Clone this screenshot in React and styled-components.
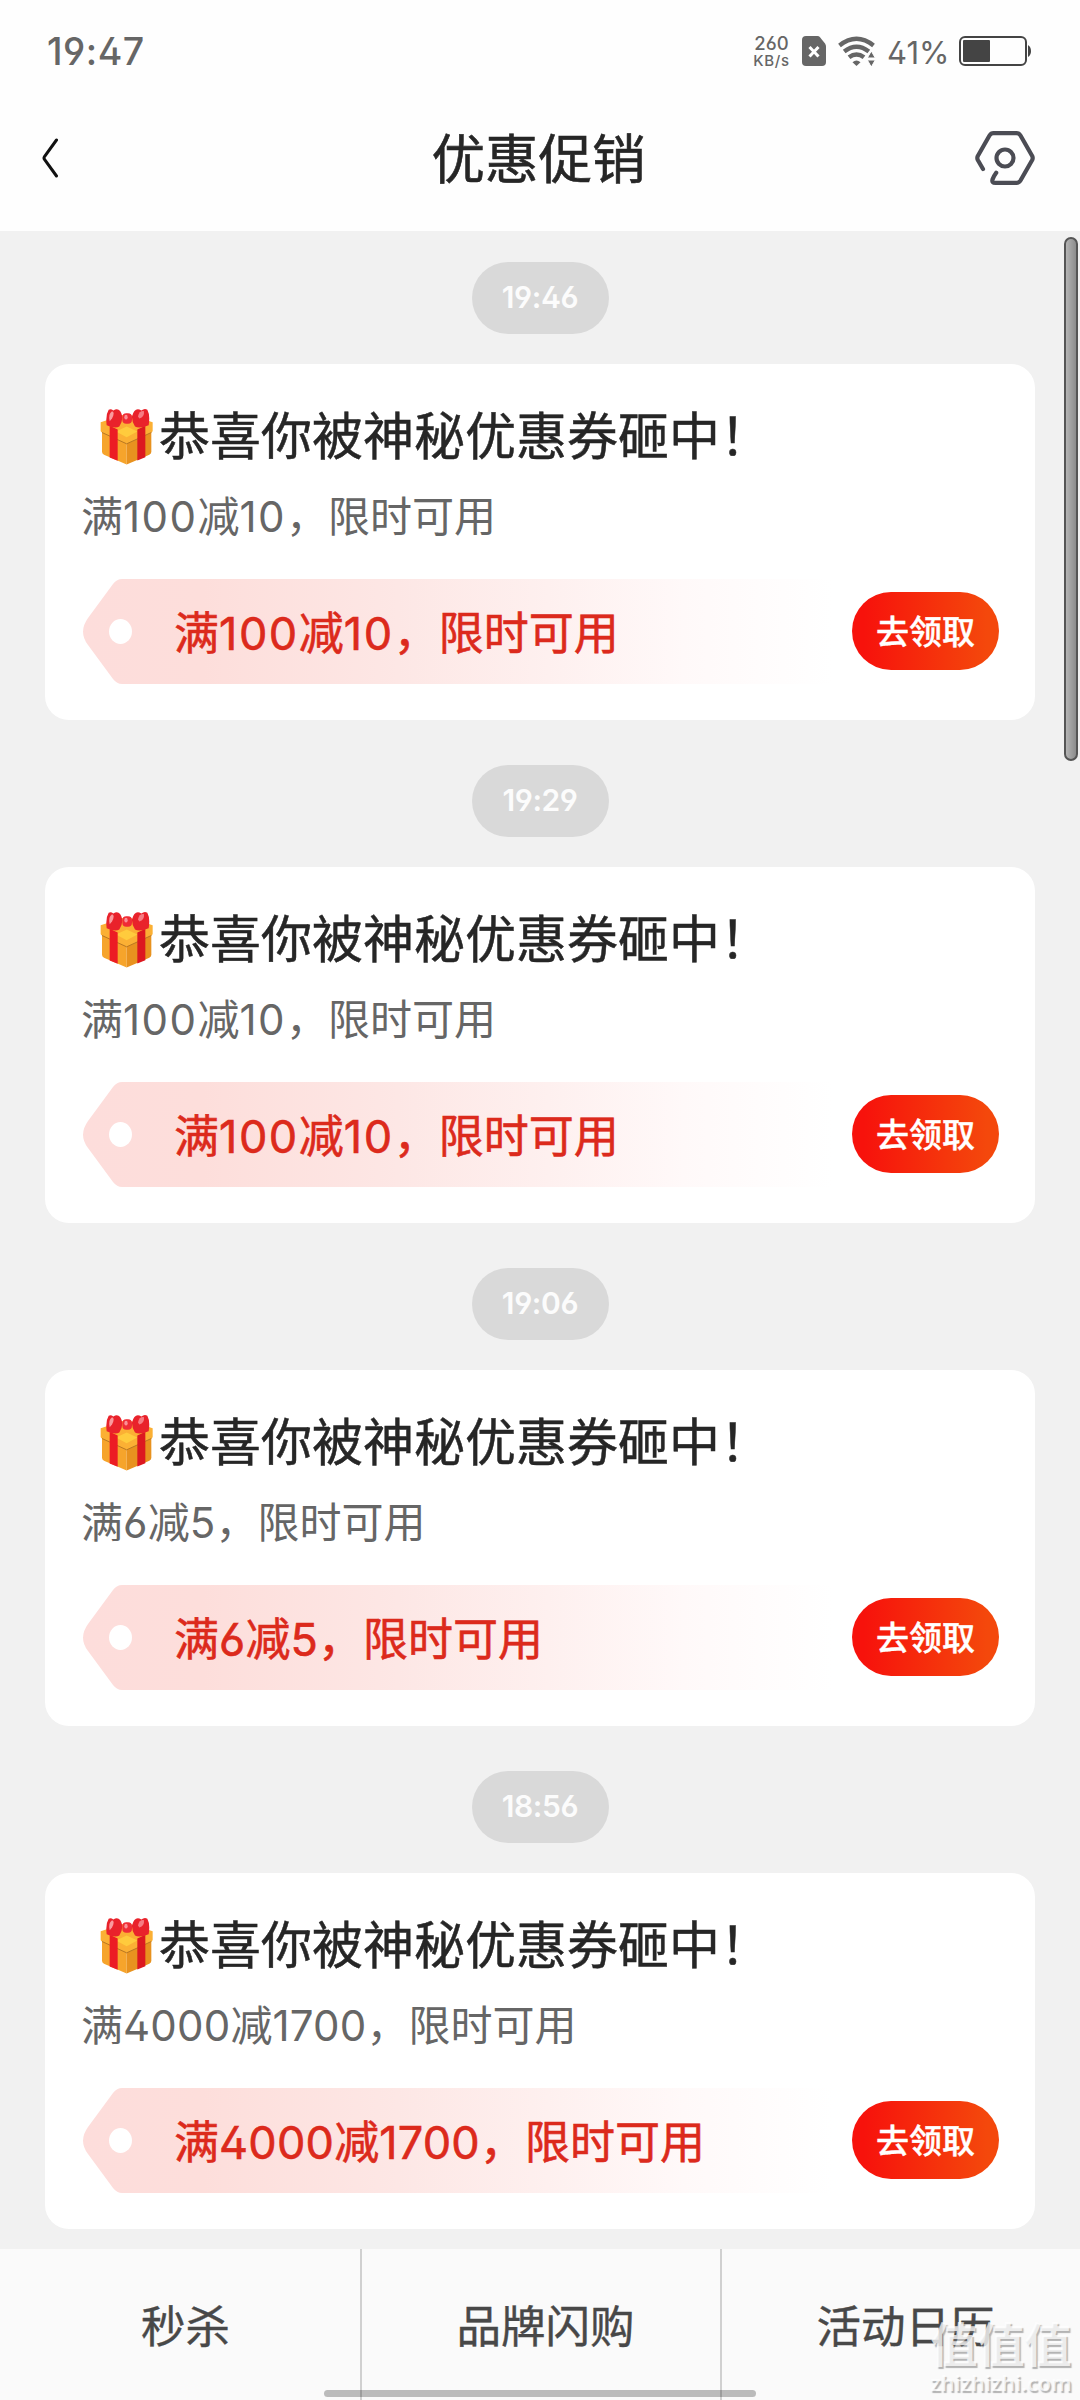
import React from 'react';

import styled, { createGlobalStyle } from 'styled-components';

const textColor = '#262626';
const subColor = '#666666';
const statusColor = '#666666';
const pointColor = '#dc2a1c';

const GlobalStyle = createGlobalStyle`
    * {
        box-sizing: border-box;
    }
    body {
        margin: 0;
        font-family: Inter, 'Noto Sans CJK SC', sans-serif;
        font-feature-settings: 'ss01';
        white-space: nowrap;
    }
`;

const Container = styled.div`
    width: 1080px;
    height: 2400px;
    position: relative;
    display: flex;
    flex-direction: column;
    overflow: hidden;
    background-color: #fefefe;
`;

const StatusBar = styled.div`
    height: 102px;
    padding: 0 49px 0 47px;
    display: flex;
    align-items: center;
    justify-content: space-between;
    color: ${statusColor};
`;

const Clock = styled.div`
    padding-top: 1px;
    font-size: 37.5px;
    line-height: 44px;
    letter-spacing: 0.5px;
    font-weight: 500;
`;

const StatusIcons = styled.div`
    display: flex;
    align-items: center;
`;

const Speed = styled.div`
    width: 37px;
    margin-right: 12px;
    text-align: center;
    font-size: 18.5px;
    line-height: 18px;
    font-weight: 500;
`;

const SpeedUnit = styled.div`
    font-size: 15px;
    line-height: 17px;
    letter-spacing: 0.7px;
`;

const Percent = styled.div`
    margin: 3px 10px 0 11px;
    width: 62px;
    font-size: 31px;
    line-height: 36px;
    letter-spacing: 0;
`;

const TitleBar = styled.div`
    height: 129px;
    padding: 0 45px 17px 42px;
    display: grid;
    grid-template-columns: 1fr auto 1fr;
    align-items: center;
`;

const Title = styled.div`
    padding-top: 4px;
    font-size: 53.5px;
    line-height: 72px;
    color: ${textColor};
    -webkit-text-stroke: 0.6px ${textColor};
`;

const TitleSide = styled.div`
    display: flex;
    justify-content: ${({ $end }) => ($end ? 'flex-end' : 'flex-start')};
`;

const List = styled.div`
    height: 2018px;
    padding: 31px 45px 0;
    background-color: #f1f1f1;
`;

const Time = styled.div`
    width: 137px;
    height: 72px;
    margin: 0 auto 30px;
    border-radius: 36px;
    background-color: #d9d9d9;
    color: #fcfcfc;
    font-size: 30px;
    line-height: 70px;
    font-weight: 600;
    letter-spacing: -0.4px;
    text-align: center;
`;

const Card = styled.div`
    width: 990px;
    height: 356px;
    margin-bottom: 45px;
    padding: 36px 36px 0 38px;
    border-radius: 24px;
    background-color: white;
`;

const CardTitle = styled.div`
    height: 72px;
    padding-left: 17px;
    display: flex;
    align-items: center;
    font-size: 51px;
    line-height: 72px;
    color: ${textColor};
    -webkit-text-stroke: 0.5px ${textColor};
`;

const CardTitleText = styled.div`
    padding-top: 2px;
    margin-left: 5px;
`;

const CardText = styled.div`
    height: 62px;
    margin: 14px 0 31px -2px;
    font-size: 42px;
    line-height: 62px;
    color: ${subColor};
`;

const CouponRow = styled.div`
    display: flex;
    align-items: center;
    justify-content: space-between;
`;

const Coupon = styled.div`
    width: 750px;
    height: 105px;
    padding-left: 26px;
    display: flex;
    align-items: center;
    background: linear-gradient(90deg, #fddddb 0%, #fddedb 16%, #fde7e5 42%, #fef0ef 62%, #fff9f9 80%, #ffffff 100%);
    clip-path: path('M39 0 H750 V105 H39 Q34 105 30 100 L5 66 Q-5 53 5 39 L30 5 Q34 0 39 0 Z');
`;

const Hole = styled.div`
    width: 23px;
    height: 25px;
    margin-right: 42px;
    border-radius: 50%;
    background-color: white;
`;

const CouponText = styled.div`
    padding-top: 5px;
    font-size: 45px;
    line-height: 64px;
    color: ${pointColor};
    -webkit-text-stroke: 0.6px ${pointColor};
`;

const Amount = styled.span`
    letter-spacing: ${({ $loose }) => ($loose ? '0.035em' : '0.005em')};
`;

const Button = styled.button`
    width: 147px;
    height: 78px;
    margin-bottom: 2px;
    padding: 2px 0 0;
    border: none;
    border-radius: 39px;
    background: linear-gradient(90deg, #f7120c 8%, #f4480c 92%);
    color: white;
    font-family: inherit;
    font-size: 33px;
    line-height: 76px;
    font-weight: 500;
    -webkit-text-stroke: 0.4px white;
`;

const TabBar = styled.div`
    height: 151px;
    display: grid;
    grid-template-columns: repeat(3, 360px);
    background-color: #fafafa;
`;

const Tab = styled.div`
    padding: 1px 0 0 ${({ $first }) => ($first ? '11px' : '9px')};
    border-left: ${({ $first }) => ($first ? 'none' : '2px solid #d0d0d0')};
    text-align: center;
    font-size: 44.5px;
    line-height: 154px;
    color: #484848;
    -webkit-text-stroke: 0.4px #484848;
`;

const ScrollThumb = styled.div`
    position: absolute;
    top: 237px;
    right: 2px;
    width: 14px;
    height: 524px;
    border: 2px solid #555;
    border-radius: 7px;
    background: linear-gradient(90deg, #b4b4b4, #8c8c8c);
`;

const HomeIndicator = styled.div`
    position: absolute;
    left: 324px;
    bottom: 3px;
    width: 432px;
    height: 7px;
    border-radius: 4px;
    background-color: rgba(0, 0, 0, 0.25);
`;

const Watermark = styled.div`
    position: absolute;
    right: 7px;
    bottom: 6px;
    width: 144px;
    text-align: center;
    color: rgba(255, 255, 255, 0.75);
    text-shadow: 1.5px 1.5px 1px rgba(120, 120, 120, 0.55);
`;

const WatermarkName = styled.div`
    font-size: 47px;
    line-height: 54px;
    font-weight: 700;
`;

const WatermarkSite = styled.div`
    font-family: 'Noto Sans', sans-serif;
    font-size: 21.5px;
    line-height: 22px;
    font-weight: 600;
`;

const SimIcon = () => (
    <svg width="24" height="30" viewBox="0 0 24 30">
        <path d="M4 0 H15.500 Q17 0 18 1.200 L23 7.500 Q24 8.800 24 10.500 V26 Q24 30 20 30 H4 Q0 30 0 26 V4 Q0 0 4 0 Z" fill={statusColor} />
        <path d="M7.500 11 L16.500 20.500 M16.500 11 L7.500 20.500" stroke="white" strokeWidth="3" />
    </svg>
);

const WifiBox = styled.svg`
    margin-left: 12px;
`;

const WifiIcon = () => (
    <WifiBox width="38" height="30" viewBox="0 0 38 30">
        <g fill="none" stroke={statusColor} strokeWidth="4.400">
            <path d="M1.500 9.500 Q18.500 -3.800 35.500 9.500" />
            <path d="M6.200 15.500 Q18.500 6 30.800 15.500" />
            <path d="M11 21.300 Q18.500 15.500 26 21.300" />
        </g>
        <path d="M14.500 26.200 Q18.500 22.800 22.500 26.200 L18.500 30 Z" fill={statusColor} />
        <path d="M33.300 15 L37.300 22 H29.300 Z M33.300 31 L29.300 24 H37.300 Z" fill={statusColor} stroke="white" strokeWidth="1" />
    </WifiBox>
);

const BatteryIcon = () => (
    <svg width="72" height="30" viewBox="0 0 72 30">
        <rect x="1" y="1" width="66" height="28" rx="5" fill="none" stroke="#444" strokeWidth="2" />
        <rect x="4" y="4" width="27" height="22" rx="1" fill="#444" />
        <path d="M69 9 Q72 11 72 15 Q72 19 69 21 Z" fill="#444" />
    </svg>
);

const BackIcon = () => (
    <svg width="17" height="40" viewBox="0 0 17 40">
        <path d="M14.500 2 L2.500 18.500 Q1.500 20 2.500 21.500 L14.500 38" fill="none" stroke="#111" strokeWidth="3" strokeLinecap="round" />
    </svg>
);

const SettingIcon = () => (
    <svg width="60" height="54" viewBox="0 0 60 54">
        <g fill="none" stroke="#4b4c54" strokeWidth="4.200" strokeLinecap="round" strokeLinejoin="round">
            <path d="M8 38 L2.800 29 Q1.800 27 2.800 25 L14.500 4.500 Q16 2.100 18.500 2.100 H41.500 Q44 2.100 45.500 4.500 L57.200 25 Q58.200 27 57.200 29 L45.500 49.500 Q44 51.900 41.500 51.900 H20.500 Q16.500 51.900 17.500 48.500 Q18.500 45.500 21.200 41.800" />
            <circle cx="30" cy="27" r="8.500" />
        </g>
    </svg>
);

const GiftIcon = () => (
    <svg width="54" height="59" viewBox="60 50 162 176">
        <path d="M66 112 L140 150 V222 L72 193 Q66 190 66 184 Z" fill="#f6a42b" />
        <path d="M214 112 L140 150 V222 L208 193 Q214 190 214 184 Z" fill="#e8921f" />
        <path d="M62 95 L140 70 L218 95 V121 Q218 124 214 126 L140 160 L66 126 Q62 124 62 121 Z" fill="#fbb034" />
        <path d="M66 126 L140 160 L214 126" fill="none" stroke="#b97822" strokeWidth="3" />
        <path d="M108 123 L140 108 L172 123 L140 140 Z" fill="#ffcb3d" />
        <path d="M89 106 L113 117 V211 L89 201 Z" fill="#ec1c24" />
        <path d="M196 106 L172 117 V210 L196 200 Z" fill="#dc1820" />
        <path d="M100 60 Q120 48 127 78 Q128 92 118 108 Q106 116 80 104 Q76 74 86 58 Q92 53 100 60 Z" fill="#e9222b" />
        <path d="M184 60 Q164 48 156 78 Q155 92 165 108 Q178 116 206 104 Q211 74 202 58 Q194 52 184 60 Z" fill="#e9222b" />
        <rect x="127" y="68" width="29" height="32" rx="12" fill="#f02c35" />
        <path d="M89 92 Q84 70 96 62 Q106 64 96 84 Z" fill="#fa9a9e" />
        <path d="M174 78 Q178 60 192 62 Q194 78 178 84 Z" fill="#f67c83" />
        <ellipse cx="138" cy="80" rx="5" ry="7" fill="#fa9096" />
    </svg>
);

const messages = [
    { time: '19:46', full: '100', minus: '10' },
    { time: '19:29', full: '100', minus: '10' },
    { time: '19:06', full: '6', minus: '5' },
    { time: '18:56', full: '4000', minus: '1700' },
];

const tabs = ['秒杀', '品牌闪购', '活动日历'];

const Discount = ({ full, minus }) => (
    <>
        {'满'}
        <Amount $loose={full === '100'}>{full}</Amount>
        {'减'}
        <Amount $loose={minus === '10'}>{minus}</Amount>
        {'，限时可用'}
    </>
);

const Message = ({ time, full, minus }) => (
    <>
        <Time>{time}</Time>
        <Card>
            <CardTitle>
                <GiftIcon />
                <CardTitleText>{'恭喜你被神秘优惠券砸中！'}</CardTitleText>
            </CardTitle>
            <CardText><Discount full={full} minus={minus} /></CardText>
            <CouponRow>
                <Coupon>
                    <Hole />
                    <CouponText><Discount full={full} minus={minus} /></CouponText>
                </Coupon>
                <Button>{'去领取'}</Button>
            </CouponRow>
        </Card>
    </>
);

const App = () => (
    <Container>
        <GlobalStyle />
        <StatusBar>
            <Clock>{'19:47'}</Clock>
            <StatusIcons>
                <Speed>
                    {'260'}
                    <SpeedUnit>{'KB/s'}</SpeedUnit>
                </Speed>
                <SimIcon />
                <WifiIcon />
                <Percent>{'41%'}</Percent>
                <BatteryIcon />
            </StatusIcons>
        </StatusBar>
        <TitleBar>
            <TitleSide><BackIcon /></TitleSide>
            <Title>{'优惠促销'}</Title>
            <TitleSide $end><SettingIcon /></TitleSide>
        </TitleBar>
        <List>
            {messages.map(({ time, full, minus }) => (
                <Message key={time} time={time} full={full} minus={minus} />
            ))}
        </List>
        <TabBar>
            {tabs.map((tab, index) => (
                <Tab key={tab} $first={index === 0}>{tab}</Tab>
            ))}
        </TabBar>
        <ScrollThumb />
        <HomeIndicator />
        <Watermark>
            <WatermarkName>{'值值值'}</WatermarkName>
            <WatermarkSite>{'zhizhizhi.com'}</WatermarkSite>
        </Watermark>
    </Container>
);

export default App;
